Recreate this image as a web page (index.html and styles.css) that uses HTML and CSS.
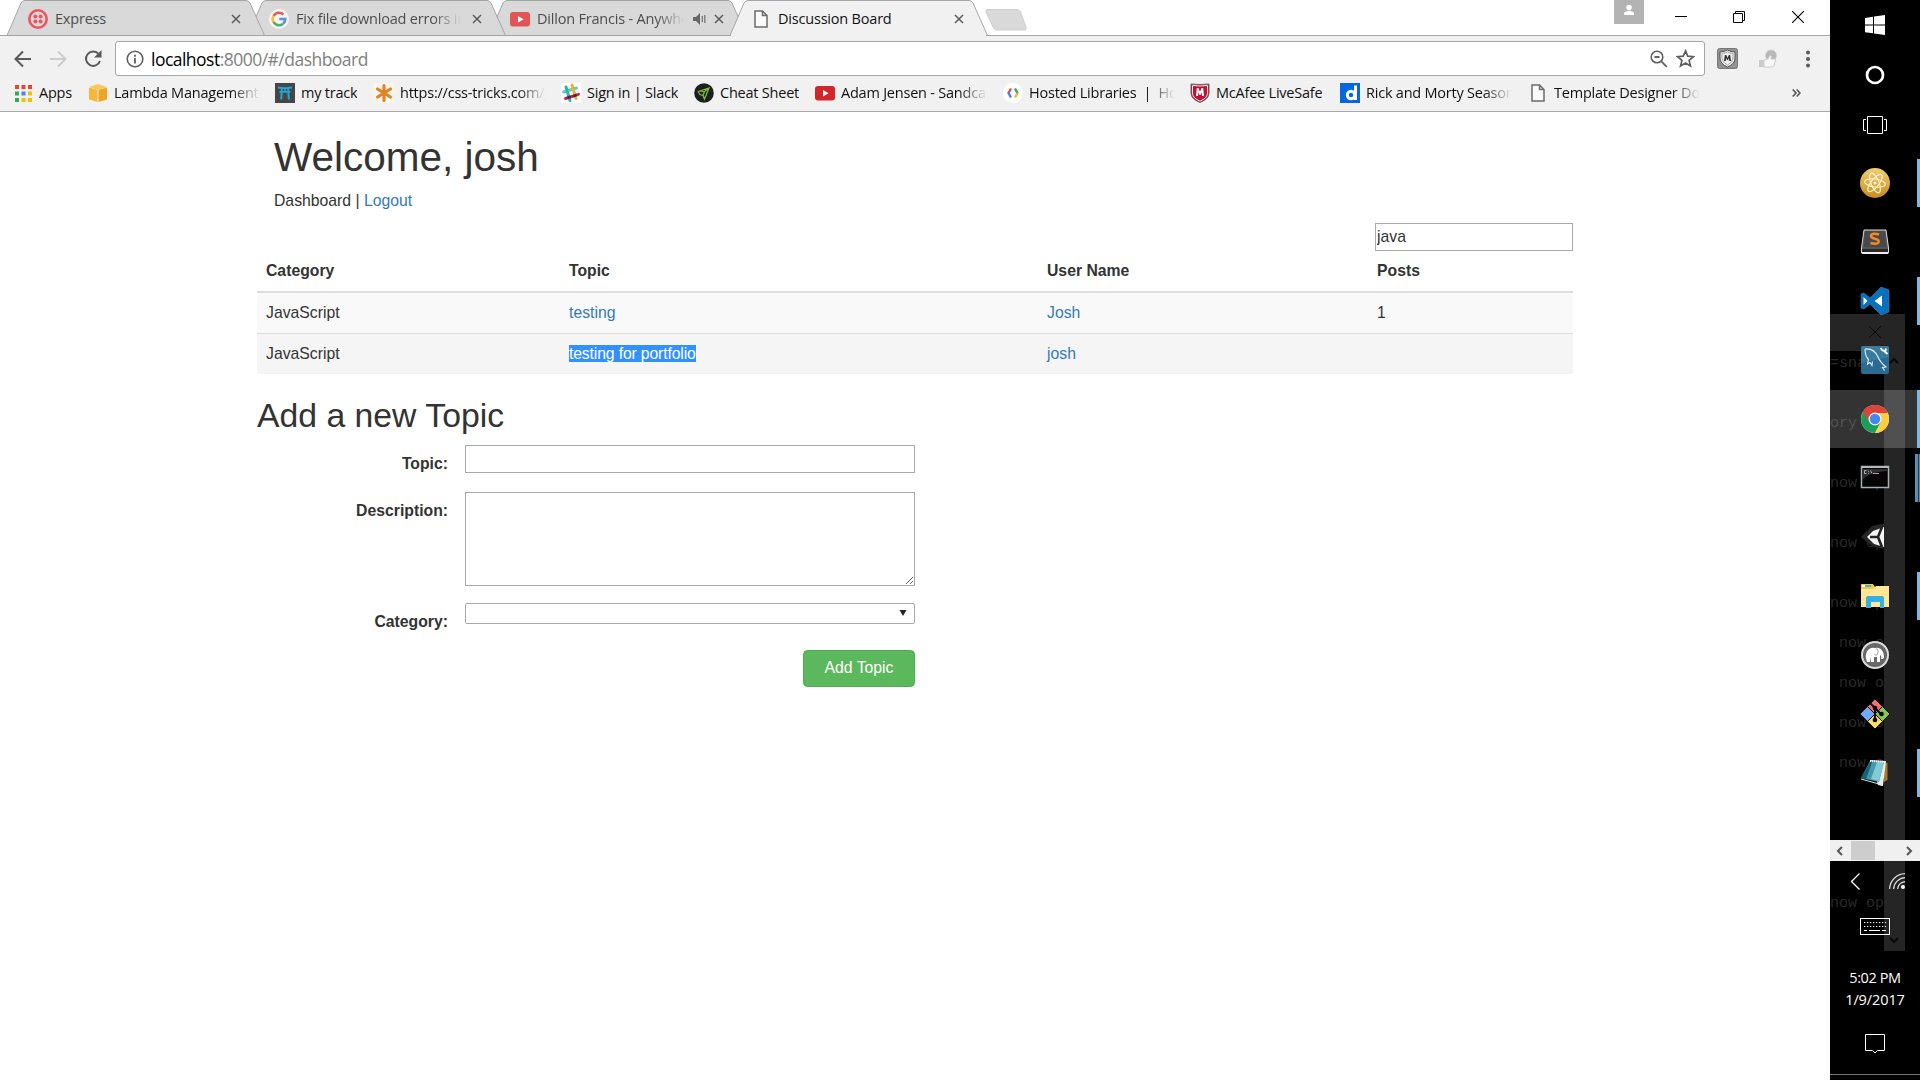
FILE: index.html
```html
<!DOCTYPE html>
<html lang="en">
<head>
<meta charset="utf-8">
<title>Discussion Board</title>
<link rel="stylesheet" href="styles.css">
</head>
<body>
<svg class="defs" width="0" height="0">
  <symbol id="tab" viewBox="0 0 258 36"><path d="M0 35.5 L14 3 Q15.500 .5 18 .5 H239 Q241.500 .5 243 3 L257.500 35.500 Z" stroke="#a5a5a5"/></symbol>
  <symbol id="close" viewBox="0 0 10 10"><path d="M1 1l8 8M9 1L1 9" stroke="#5a5a5a" stroke-width="1.5"/></symbol>
  <symbol id="youtube" viewBox="0 0 20 20"><rect x="0" y="3" width="20" height="14.500" rx="3"/><path d="M8 7l5.500 3.200L8 13.500z" fill="#fff"/></symbol>
  <symbol id="page" viewBox="0 0 14 18"><path d="M1 1h7.500l4.500 4.500V17H1zM8.500 1v4.500H13" fill="#fafafa" stroke="#6b6b6b" stroke-width="1.500"/></symbol>
</svg>
<div class="desktop">
<div class="browser">
  <header class="tabs">
    <div class="tab t1"><svg class="shape"><use href="#tab"/></svg>
      <svg class="fav" viewBox="0 0 20 20"><circle cx="10" cy="10" r="8.700" fill="none" stroke="#ef5360" stroke-width="2.600"/><g fill="#ef5360"><circle cx="7.400" cy="7.400" r="2"/><circle cx="12.600" cy="7.400" r="2"/><circle cx="7.400" cy="12.600" r="2"/><circle cx="12.600" cy="12.600" r="2"/></g></svg>
      <span class="title">Express</span><svg class="x"><use href="#close"/></svg></div>
    <div class="tab t2"><svg class="shape"><use href="#tab"/></svg>
      <svg class="fav" viewBox="0 0 20 20"><circle cx="10" cy="10" r="10" fill="#f5f5f5"/><g fill="none" stroke-width="2.600"><path d="M4.600 7A6.200 6.200 0 0 1 14.500 5.600" stroke="#ea5b50"/><path d="M4.500 6.900a6.200 6.200 0 0 0 0 6.200" stroke="#f6c244"/><path d="M4.500 13a6.200 6.200 0 0 0 9.300 1.900" stroke="#4fae65"/><path d="M10.300 10h6a6.200 6.200 0 0 1-2.300 4.900" stroke="#5b8fee"/></g></svg>
      <span class="title fade g">Fix file download errors in</span><svg class="x"><use href="#close"/></svg></div>
    <div class="tab t3"><svg class="shape"><use href="#tab"/></svg>
      <svg class="fav" viewBox="0 0 20 20" fill="#e25556"><use href="#youtube"/></svg>
      <span class="title fade d">Dillon Francis - Anywhe</span>
      <svg class="snd" viewBox="0 0 13 12"><path d="M0 4h3l4-4v12L3 8H0z" fill="#666"/><path d="M9.300 3v6M11.800 2v8" stroke="#777" stroke-width="1.300"/></svg>
      <svg class="x"><use href="#close"/></svg></div>
    <div class="tab t4"><svg class="shape"><use href="#tab"/></svg>
      <svg class="fav doc" viewBox="0 0 14 18"><use href="#page"/></svg>
      <span class="title">Discussion Board</span><svg class="x"><use href="#close"/></svg></div>
    <svg class="newtab" viewBox="0 0 42 22"><path d="M3 .5H32q2.500 0 3.500 2.500l5.500 15q1 3-1.500 3H12q-2.500 0-3.500-2L1 3Q0 .5 3 .5z" fill="#d9d9d9" stroke="#cfcfcf"/></svg>
    <div class="winctl">
      <svg class="user" viewBox="0 0 30 24"><rect width="30" height="24" fill="#b3b3b3"/><circle cx="15" cy="7.500" r="2.800" fill="#fff"/><path d="M10 15v-1.500q0-2.500 5-2.500t5 2.500V15z" fill="#fff"/></svg>
      <svg class="min" viewBox="0 0 12 12"><path d="M0 5.500h12" stroke="#000"/></svg>
      <svg class="max" viewBox="0 0 12 12"><path d="M.5 2.500h9v9h-9zM2.500 2.500v-2h9v9h-2" fill="none" stroke="#000"/></svg>
      <svg class="cls" viewBox="0 0 12 12"><path d="M0 0l12 12M12 0L0 12" stroke="#000" stroke-width="1.100"/></svg>
    </div>
  </header>
  <div class="toolbar">
    <svg class="nav" viewBox="0 0 18 18"><path d="M17 9H2M9 1.500L1.500 9 9 16.500" fill="none" stroke="#5a5a5a" stroke-width="2"/></svg>
    <svg class="nav" viewBox="0 0 18 18"><path d="M1 9h15M9 1.500L16.500 9 9 16.500" fill="none" stroke="#ccc" stroke-width="2"/></svg>
    <svg class="nav" viewBox="0 0 18 18"><path d="M14.800 4.200A7.200 7.200 0 1 0 16 11" fill="none" stroke="#5a5a5a" stroke-width="2"/><path d="M17.500 0v7.500H10z" fill="#5a5a5a"/></svg>
    <div class="omnibox">
      <svg class="info" viewBox="0 0 18 18"><circle cx="9" cy="9" r="7.800" fill="none" stroke="#5f5f5f" stroke-width="1.600"/><path d="M9 8v5.500M9 4.800v2" stroke="#5f5f5f" stroke-width="1.800"/></svg>
      <span class="url"><b>localhost</b>:8000/#/dashboard</span>
      <svg class="mag" viewBox="0 0 18 18"><circle cx="7" cy="7" r="5.800" fill="none" stroke="#616161" stroke-width="1.600"/><path d="M4.500 7h5M11.300 11.300l5.500 5.500" stroke="#616161" stroke-width="1.800"/></svg>
      <svg class="star" viewBox="0 0 18 18"><path d="M9 1.800l2.100 5 5.400.5-4.100 3.500 1.300 5.300L9 13.300l-4.700 2.800 1.300-5.300-4.100-3.500 5.400-.5z" fill="none" stroke="#5f5f5f" stroke-width="1.600"/></svg>
    </div>
    <svg class="ext" viewBox="0 0 21 21"><rect x=".5" y=".5" width="20" height="20" rx="2" fill="#929292" stroke="#777"/><path d="M3 4q4 0 7.500-2Q14 4 18 4v6q0 6-7.500 9Q3 16 3 10z" fill="#eee" stroke="#555"/><path d="M5 5.500q3 0 5.500-1.600Q13 5.500 16 5.500V10q0 4.500-5.500 7Q5 14.500 5 10z" fill="none" stroke="#999" stroke-width=".8"/><path d="M7 13l.8-6h1.400l1.300 3 1.300-3h1.400l.8 6h-1.800l-.4-3-.8 2h-1l-.8-2-.4 3z" fill="#333"/></svg>
    <svg class="thumb" viewBox="0 0 20 20"><circle cx="13" cy="6.500" r="5.500" fill="#b8b8b8" stroke="#ccc" stroke-dasharray="2 1"/><path d="M1 11h5v7H1z" fill="#c9c9c9"/><path d="M6 11l4-1 2-4q2 0 1 4h4q1 1 0 3l-1 4q0 1-3 1H6z" fill="#f8f8f8" stroke="#ccc"/></svg>
    <svg class="dots" viewBox="0 0 4 18" fill="#5a5a5a"><circle cx="2" cy="2.500" r="2"/><circle cx="2" cy="9" r="2"/><circle cx="2" cy="15.500" r="2"/></svg>
  </div>
  <nav class="bookmarks">
    <div class="bm b-apps"><svg viewBox="0 0 17 17"><g fill="#ea4335"><path d="M0 0h4v4H0zM6.500 0h4v4h-4zM13 0h4v4h-4z"/></g><path d="M0 6.500h4v4H0zM0 13h4v4H0z" fill="#34a853"/><path d="M6.500 6.500h4v4h-4z" fill="#4285f4"/><path d="M13 6.500h4v4h-4zM6.500 13h4v4h-4zM13 13h4v4h-4z" fill="#fbbc05"/></svg><span>Apps</span></div>
    <div class="bm b-lambda"><svg viewBox="0 0 18 18"><path d="M0 3l9-3 9 3-9 3z" fill="#f9c95a"/><path d="M0 3.500l8.500 2.500v12L0 15.500z" fill="#f6b73a"/><path d="M18 3.500L9.500 6v12l8.500-2.500z" fill="#eba623"/></svg><span class="fade">Lambda Management C</span></div>
    <div class="bm b-track"><svg viewBox="0 0 20 20"><path d="M0 0h20v20H0z" fill="#464646"/><path d="M3 3.500q7 1.300 14 0v2q-7 1.200-14 0zM4.500 8h11v1.800h-11zM6 5h1.800l-.6 11.500H5.200zM12.200 5H14l.8 11.500h-2zM9.300 5h1.400v4H9.300z" fill="#20a8dd"/></svg><span>my track</span></div>
    <div class="bm b-css"><svg viewBox="0 0 20 20"><path d="M0 0h20v20H0z" fill="#fff5ea"/><path d="M10 2.500v15M3.500 6l13 8M3.500 14l13-8" stroke="#df8428" stroke-width="3.200" stroke-linecap="round"/></svg><span class="fade">https://css-tricks.com/g</span></div>
    <div class="bm b-slack"><svg viewBox="0 0 20 20"><path d="M0 0h20v20H0z" fill="#fff"/><g stroke-width="2.900" stroke-linecap="round"><path d="M2.500 9L15.500 5" stroke="#62c9dc"/><path d="M4.500 15.500l13-4.200" stroke="#e01563"/><path d="M5 4l4 13.500" stroke="#35b58a"/><path d="M11 2l4 13.500" stroke="#ecb32d"/><path d="M7.200 14.600l1.600-.5M13 12.800l1.600-.5" stroke="#472a49"/></g></svg><span>Sign in | Slack</span></div>
    <div class="bm b-cheat"><svg viewBox="0 0 20 20"><circle cx="10" cy="10" r="9.800" fill="#1c1f20"/><path d="M4 8.500L15 5l-4.500 11L9 12.500M4 8.500l2 3 3 1 1.500-4L6.500 8M10.500 8.500L15 5" fill="none" stroke="#80ba32" stroke-width="1.300"/></svg><span>Cheat Sheet</span></div>
    <div class="bm b-yt"><svg viewBox="0 0 20 20" fill="#d3252a"><use href="#youtube"/></svg><span class="fade">Adam Jensen - Sandcas</span></div>
    <div class="bm b-host"><svg viewBox="0 0 20 20"><circle cx="10" cy="10" r="10" fill="#fff"/><g fill="none" stroke-width="2.400"><path d="M8 5.500L5.500 10" stroke="#e94b3f"/><path d="M5 9.200L8 14.500" stroke="#4285f4"/><path d="M12 5.500L14.700 10.500" stroke="#34a36a"/><path d="M14.600 10L12 14.500" stroke="#f5b825"/></g></svg><span class="fade pre">Hosted Libraries  |  Hos</span></div>
    <div class="bm b-mcafee"><svg viewBox="0 0 20 20"><path d="M1 1q9 1 18 0v9q0 6-9 9.500Q1 16 1 10z" fill="#c01033" stroke="#666"/><path d="M2.500 2.500q7.500 1 15 0v7.500q0 5-7.500 8.200Q2.500 15 2.500 10z" fill="none" stroke="#eee"/><path d="M6 13l.8-8h1.700L10 8.800 11.500 5h1.700l.8 8h-2l-.5-3.800L10.500 12h-1L8.500 9.200 8 13z" fill="#fff"/></svg><span>McAfee LiveSafe</span></div>
    <div class="bm b-rick"><svg viewBox="0 0 20 20"><path d="M0 0h20v20H0z" fill="#0766df"/><circle cx="11" cy="12" r="3.700" fill="none" stroke="#fff" stroke-width="3"/><path d="M15.500 17V2.500" stroke="#fff" stroke-width="3"/></svg><span class="fade">Rick and Morty Season</span></div>
    <div class="bm b-template"><svg viewBox="0 0 14 18"><use href="#page"/></svg><span class="fade">Template Designer Docu</span></div>
    <svg class="more" viewBox="0 0 9 8"><path d="M.7.5L4 4 .7 7.500M4.700.5L8 4 4.700 7.500" fill="none" stroke="#555" stroke-width="1.600"/></svg>
  </nav>
  <main class="page">
    <h1>Welcome, josh</h1>
    <p class="crumbs">Dashboard | <a>Logout</a></p>
    <div class="search"><input class="field" type="text" value="java"></div>
    <table>
      <thead><tr><th class="c1">Category</th><th class="c2">Topic</th><th class="c3">User Name</th><th>Posts</th></tr></thead>
      <tbody>
        <tr class="odd"><td>JavaScript</td><td><a>testing</a></td><td><a>Josh</a></td><td>1</td></tr>
        <tr class="hover"><td>JavaScript</td><td><a class="selected">testing for portfolio</a></td><td><a>josh</a></td><td></td></tr>
      </tbody>
    </table>
    <h2>Add a new Topic</h2>
    <form>
      <label>Topic:</label><input class="field" type="text">
      <label>Description:</label><textarea class="field"></textarea>
      <label>Category:</label><div class="select"><svg viewBox="0 0 8 6"><path d="M.5 0h7L4 6z" fill="#222"/></svg></div>
      <button type="button">Add Topic</button>
    </form>
  </main>
</div>
<aside class="taskbar">
  <div class="ghost">
    <div class="ghost-head"><svg viewBox="0 0 12 12"><path d="M0 0l12 12M12 0L0 12" stroke="#080808"/></svg></div>
    <div class="ghost-bar"></div>
    <span style="top:355px">=sna</span><span style="top:415px">ory</span><span style="top:475px">now op</span><span style="top:535px">now op</span><span style="top:595px">now op</span><span class="in" style="top:635px">now o</span><span class="in" style="top:675px">now o</span><span class="in" style="top:715px">now o</span><span class="in" style="top:755px">now o</span><span style="top:895px">now op</span>
    <svg class="up" viewBox="0 0 10 8"><path d="M1 6l4-4 4 4" fill="none" stroke="#080808" stroke-width="2"/></svg>
    <svg class="down" viewBox="0 0 10 8"><path d="M1 2l4 4 4-4" fill="none" stroke="#080808" stroke-width="2"/></svg>
  </div>
  <div class="sys"><svg width="20" height="20" viewBox="0 0 20 20" fill="#fff"><path d="M0 3l8-1.200V9.500H0zM9 1.600L20 0v9.500H9zM0 10.500h8v7.800L0 17.200zM9 10.500h11V20L9 18.400z"/></svg></div>
  <div class="sys"><svg width="20" height="20" viewBox="0 0 20 20"><circle cx="10" cy="10" r="8" fill="none" stroke="#fff" stroke-width="2.700"/></svg></div>
  <div class="sys"><svg width="24" height="18" viewBox="0 0 24 18"><path d="M4.500.5h15v17h-15zM3 3.500H.5v11H3M21 3.500h2.500v11H21" fill="none" stroke="#fff"/></svg></div>
  <div class="apps">
    <div class="app open"><svg viewBox="0 0 30 30"><defs><linearGradient id="gold" x2="0" y2="1"><stop stop-color="#efd074"/><stop offset="1" stop-color="#c98b20"/></linearGradient></defs><circle cx="15" cy="15" r="15" fill="url(#gold)"/><g fill="none" stroke="#fff5cf" stroke-width="1.100" transform="rotate(8 15 15)"><ellipse cx="15" cy="15" rx="10.500" ry="4"/><ellipse cx="15" cy="15" rx="10.500" ry="4" transform="rotate(60 15 15)"/><ellipse cx="15" cy="15" rx="10.500" ry="4" transform="rotate(120 15 15)"/></g><circle cx="15" cy="15" r="1.500" fill="#fff"/></svg></div>
    <div class="app"><svg viewBox="0 0 30 30"><path d="M4 3h22l2.500 18v5h-27v-5z" fill="#555" stroke="#ddd"/><path d="M2 22h26v3.500H2z" fill="#292929"/><path d="M2 26h26" stroke="#eee" stroke-width="2"/><path d="M5 4h20l1 16H4z" fill="#494949"/><path d="M19 7.500q-7-2-8 1-.3 2.500 4 3.300 4.500.8 3.500 3.500-1.500 2.500-8 .7" fill="none" stroke="#f58a24" stroke-width="2.600"/></svg></div>
    <div class="app open"><svg viewBox="0 0 30 30"><path d="M1 8l3-1 6 5L21 1l8 3v22l-8 3-11-11-6 5-3-1z" fill="#0871bd" stroke="#477ea8" stroke-width=".6"/><path d="M3.500 11v8l4-4zM22 9.500v11L14.500 15z" fill="#fff"/></svg></div>
    <div class="app"><svg viewBox="0 0 30 30"><rect x="1" y="1" width="28" height="28" rx="2" fill="#2c6b91"/><path d="M1 3q0-2 2-2h24q2 0 2 2v9L1 18z" fill="#397b9e"/><path d="M5 4q9-1 13 8 2 5 8 10l-3.500.5 2 3M5 4q0 7 3.500 10.500L7.500 19l2.500-1.500 2 3 .5-4" fill="none" stroke="#e3f0f6" stroke-width="1.100"/><path d="M20.500 3l2 2.500 3 .5.500-2.500M23 5l4.500 4" fill="none" stroke="#fff" stroke-width="1.800"/></svg></div>
    <div class="app active"><svg viewBox="0 0 28 28"><circle cx="14" cy="14" r="14" fill="#e8e8e8"/><path d="M14 14L1.900 7A14 14 0 0 1 26.100 7z" fill="#db4437"/><path d="M14 14L1.900 7A14 14 0 0 0 14 28l6-10.500z" fill="#179f5c"/><path d="M14 7.500h12.500A14 14 0 0 1 14 28l5.600-10.800z" fill="#ffce43"/><path d="M1.900 7L8 17l3-9h15.500L26 7A14 14 0 0 0 1.900 7" fill="#db4437"/><circle cx="14" cy="14" r="6.500" fill="#f5f5f5"/><circle cx="14" cy="14" r="5.200" fill="#4688f1"/></svg></div>
    <div class="app open multi"><svg viewBox="0 0 30 24"><rect x="1.500" y="1.500" width="27" height="21" fill="#050505" stroke="#a8afb5" stroke-width="1.500"/><path d="M2 4h26v2Q7 7 2 16z" fill="#303030"/><path d="M2 2.300h26" stroke="#ddd"/><path d="M6.500 5.500H4.500v3h2M8.500 5.800v.9M8.500 7.800v.9M10.500 5.500l1.500 3M13 8.500h6" fill="none" stroke="#bbb" stroke-width=".9"/></svg></div>
    <div class="app"><svg viewBox="0 0 30 30"><path d="M1 15L12 4l13-3 2 13-1 13-13-2z" fill="#262626"/><path d="M7 15l6-6 11-4v20l-10-3z" fill="#f4f4f4"/><path d="M10 15h8l4-10M18 15l4 10" fill="none" stroke="#222" stroke-width="2.600"/><path d="M13 11l5-2-2 4h-4zM12 17h4l2 4-4-1z" fill="#f4f4f4"/></svg></div>
    <div class="app open"><svg viewBox="0 0 30 30"><path d="M1 3h12l2 3h14v20H1z" fill="#f5c940"/><path d="M2 4h3v2H2z" fill="#fff"/><path d="M5 4h6v2H5z" fill="#3fb2e5"/><path d="M1 8h12l3-3h13v21H1z" fill="#ffe794"/><path d="M6 27V17q0-2 2-2h14q2 0 2 2v10h-4v-6h-9v6z" fill="#35afe4"/></svg></div>
    <div class="app"><svg viewBox="0 0 30 30"><circle cx="15" cy="15" r="13" fill="#686868" stroke="#ddd" stroke-width="2"/><path d="M7 22q-2.500-7 .5-11.500Q10 7 15 8q5-1 8 4 2 5 0 7h-2q1-3-1-4v7h-3v-5h-3v5h-3v-5l-1 5z" fill="#fff"/><path d="M16.500 8q3 4 1 6.500-2 1.500-3 0" fill="none" stroke="#888" stroke-width=".8"/></svg></div>
    <div class="app"><svg viewBox="0 0 30 30"><g stroke="#111" stroke-width="1"><path d="M15 0l7.500 7.500L15 15 7.500 7.500z" fill="#f66f70"/><path d="M22.500 7.500L30 15l-7.500 7.500L15 15z" fill="#80c84e"/><path d="M7.500 7.500L15 15l-7.500 7.500L0 15z" fill="#72a8fa"/><path d="M15 15l7.500 7.500L15 30l-7.500-7.500z" fill="#f9dc68"/></g><path d="M10.500 4.500L15 9v12M15 9l6 6" stroke="#111" stroke-width="2" fill="none"/><circle cx="15" cy="9" r="2.300"/><circle cx="15" cy="21" r="2.300"/><circle cx="21.500" cy="15" r="2.300"/></svg></div>
    <div class="app open"><svg viewBox="0 0 30 30"><path d="M24 4l3.500 1v17L24 24z" fill="#a97826"/><path d="M10 2l16 1-3 25-5-1z" fill="#e6eef0"/><path d="M10 3l14 1-5 20L1 20z" fill="#3f9aab"/><path d="M10 4l2 .5L6 21l-5-1z" fill="#176270"/><path d="M17 4h7l-5 19-8-2z" fill="#85cad3"/><path d="M1 21l18 5 3 1.500" fill="none" stroke="#dbe8ea"/><path d="M10 3l16 1" stroke="#eee" stroke-width="2" stroke-dasharray="1 1"/></svg></div>
  </div>
  <div class="hscroll"><svg viewBox="0 0 7 10"><path d="M6 1L2 5l4 4" /></svg><i></i><svg viewBox="0 0 7 10"><path d="M1 1l4 4-4 4"/></svg></div>
  <div class="tray"><svg width="9" height="17" viewBox="0 0 9 17"><path d="M8.500.5l-8 8 8 8" fill="none" stroke="#fff" stroke-width="1.300"/></svg><svg width="16" height="16" viewBox="0 0 16 16"><g fill="none" stroke="#ddd" stroke-width="1.200"><path d="M.6 16A16 16 0 0 1 16 .6M4.600 16A12 12 0 0 1 16 4.600M8.600 16A8 8 0 0 1 16 8.600"/></g><circle cx="14" cy="14" r="2" fill="#fff"/></svg></div>
  <div class="keys"><svg width="30" height="17" viewBox="0 0 30 17"><rect x=".5" y=".5" width="29" height="16" fill="none" stroke="#fff"/><path d="M4 4.500h22M4 8.500h22" stroke="#fff" stroke-dasharray="1.300 1.700"/><path d="M4 12.500h3M9 12.500h11M22 12.500h4" stroke="#fff"/></svg></div>
  <div class="clock"><span>5:02 PM</span><span class="date">1/9/2017</span></div>
  <div class="notes"><svg width="20" height="20" viewBox="0 0 20 20"><path d="M.5.500h19v16h-7l-2.500 2.500-2.500-2.500h-7z" fill="none" stroke="#fff"/></svg></div>
</aside>
</div>
</body>
</html>
```
FILE: styles.css
```css
* { box-sizing: border-box; }
body { margin: 0; background: #fff; color: #333; font: 15.75px/22.5px "Liberation Sans", Arial, sans-serif; overflow: hidden; }
svg { display: block; flex: none; }
.defs { position: absolute; }
.desktop { display: flex; width: 1920px; height: 1080px; }
.browser { width: 1830px; flex: none; }

.tabs { display: flex; height: 36px; padding-left: 7px; border-bottom: 1px solid #a5a5a5; font: 14.5px/20px "Open Sans", "Noto Sans", sans-serif; letter-spacing: -.2px; }
.tab { position: relative; display: flex; align-items: center; width: 258px; height: 36px; margin-right: -17px; padding: 2px 24px 0 21px; color: #4d4d4d; flex: none; }
.tab .shape { position: absolute; left: 0; top: 0; width: 258px; height: 36px; z-index: -1; fill: #d9d9d9; }
.t1 { z-index: 3; } .t2 { z-index: 2; } .t3 { z-index: 1; padding-right: 23px; } .t4 { z-index: 4; color: #111; }
.t4 .shape { fill: #f1f1f1; }
.t4::after { content: ""; position: absolute; left: 1px; right: 2px; bottom: 0; height: 1px; background: #f1f1f1; }
.fav { width: 20px; height: 20px; margin-right: 7px; }
.fav.doc { width: 14px; height: 18px; margin: 0 10px 0 3px; }
.title { flex: 1; white-space: nowrap; overflow: hidden; }
.fade { -webkit-mask-image: linear-gradient(to right, #000 calc(100% - 28px), transparent); mask-image: linear-gradient(to right, #000 calc(100% - 28px), transparent); }
.title.g { max-width: 166px; margin-right: 11px; }
.title.d { max-width: 147px; }
.snd { width: 13px; height: 12px; margin: 0 8px 0 9px; }
.x { width: 10px; height: 10px; }
.newtab { width: 42px; height: 22px; margin: 9px 0 0 14px; }
.winctl { display: flex; margin-left: auto; padding-right: 26px; }
.user { width: 30px; height: 24px; }
.min, .max, .cls { width: 12px; height: 12px; margin-top: 11px; }
.min { margin-left: 31px; } .max { margin-left: 46px; } .cls { margin-left: 47px; }

.toolbar { display: flex; align-items: center; height: 40px; padding: 5px 20px 0 14px; background: #f1f1f1; }
.nav { width: 18px; height: 18px; margin-right: 17px; }
.nav:nth-child(3) { margin-right: 13px; }
.omnibox { display: flex; align-items: center; width: 1590px; height: 35px; padding: 0 10px; border: 1px solid #a5a5a5; border-radius: 3px; background: #fff; }
.info { width: 18px; height: 18px; margin-right: 7px; }
.url { flex: 1; font: 17.500px/24px "Open Sans", "Noto Sans", sans-serif; letter-spacing: -.52px; color: #808080; }
.url b { font-weight: 400; color: #000; }
.mag { width: 18px; height: 18px; margin-right: 8px; }
.star { width: 19px; height: 19px; margin-right: -1px; }
.ext { width: 21px; height: 21px; margin-left: 12px; }
.thumb { width: 20px; height: 20px; margin-left: 20px; }
.dots { width: 4px; height: 18px; margin-left: auto; }

.bookmarks { display: flex; align-items: center; height: 36px; padding: 0 29px 1px 14px; border-bottom: 1px solid #a9a9a9; background: #f1f1f1; font: 14.500px/20px "Open Sans", "Noto Sans", sans-serif; letter-spacing: -.22px; color: #111; }
.bm { display: flex; align-items: center; flex: none; gap: 6px; white-space: nowrap; }
.bm svg { width: 20px; height: 20px; }
.bm span { overflow: hidden; }
.bm .fade { width: 146px; }
.pre { white-space: pre; }
.b-apps { width: 75px; gap: 7px; padding-left: 1px; } .b-apps svg { width: 17px; height: 17px; }
.b-lambda { width: 186px; gap: 7px; } .b-lambda svg { width: 18px; height: 18px; }
.b-track { width: 99px; } .b-css { width: 187px; } .b-slack { width: 133px; } .b-cheat { width: 121px; }
.b-yt { width: 188px; } .b-host { width: 187px; } .b-mcafee { width: 150px; } .b-rick { width: 190px; }
.b-template { width: 170px; gap: 9px; padding-left: 1px; } .b-template svg { width: 14px; height: 18px; }
.more { width: 9px; height: 8px; margin-left: auto; }

.page { width: 1316px; margin-left: 257px; padding-top: 23px; }
h1 { margin: 0; padding-left: 17px; font-size: 40.500px; line-height: 45px; font-weight: 400; }
.crumbs { margin: 10px 0 0; padding-left: 17px; }
a { color: #337ab7; }
.search { display: flex; justify-content: flex-end; height: 28px; margin-top: 10.500px; }
.field { font: inherit; color: #333; border: 1px solid #a9a9a9; border-radius: 0; background: #fff; padding: 1px; margin: 0; outline: 0; }
input.field { height: 28px; }
.search .field { width: 198px; }
table { width: 1316px; table-layout: fixed; border-collapse: separate; border-spacing: 0; }
.c1 { width: 303px; } .c2 { width: 478px; } .c3 { width: 330px; }
th, td { text-align: left; line-height: 22px; }
th { height: 42px; padding: 9px 9px 9px; border-bottom: 2px solid #ddd; vertical-align: top; }
td { height: 40px; padding: 9px; }
.odd { background: #f9f9f9; }
.hover { background: #f5f5f5; }
.hover td { height: 41px; border-top: 1px solid #ddd; }
.selected { background: #3390ff; color: #fff; line-height: 17px; letter-spacing: -.14px; }
h2 { margin: 23px 0 0; font-size: 33.750px; line-height: 37px; font-weight: 400; }
form { display: grid; grid-template-columns: 191px 450px; column-gap: 17px; grid-template-rows: 47px 111px 47px 38px; align-items: start; margin-top: 11px; }
label { text-align: right; font-weight: 700; padding-top: 8px; }
textarea.field { height: 94px; }
form .field { width: 450px; }
.select { display: flex; justify-content: flex-end; height: 21px; padding: 6px 7px; border: 1px solid #a9a9a9; border-radius: 2px; }
.select svg { width: 8px; height: 6px; }
button { grid-column: 2; justify-self: end; width: 112px; height: 37px; padding: 0; border: 1px solid #4cae4c; border-radius: 4.500px; background: #5cb85c; color: #fff; font: inherit; }

.taskbar { position: relative; z-index: 0; display: flex; flex-direction: column; width: 90px; height: 1080px; background: #000; color: #fff; overflow: hidden; }
.ghost { position: absolute; inset: 0; z-index: -1; color: #292929; font: 15px/18px "Liberation Mono", monospace; white-space: pre; }
.ghost span { position: absolute; left: 0; width: 54px; overflow: hidden; }
.ghost span.in { padding-left: 9px; }
.ghost-head { position: absolute; top: 314px; left: 0; width: 75px; height: 37px; padding: 12px 0 0 39px; background: #252525; }
.ghost-head svg { width: 12px; height: 12px; }
.ghost-bar { position: absolute; top: 351px; left: 54px; width: 21px; height: 600px; background: #252525; }
.up, .down { position: absolute; left: 59px; width: 10px; height: 8px; }
.up { top: 357px; } .down { top: 936px; }
.sys { display: flex; align-items: center; justify-content: center; height: 50px; }
.apps { padding-top: 3px; height: 690px; }
.app { display: flex; align-items: center; justify-content: center; height: 59px; }
.app svg { width: 30px; height: 30px; }
.app.open { background: linear-gradient(#76b9ed, #76b9ed) right center / 3px 48px no-repeat; }
.app.active { height: 58px; margin: 1px 0 0; border-right: 3px solid #76b9ed; background: rgba(255,255,255,.2); padding-left: 3px; }
.app.active svg { width: 28px; height: 28px; }
.app.multi { background: linear-gradient(to right, #5a8db4 3px, #25394a 3px 4px, #5a8db4 4px) right center / 5px 48px no-repeat; }
.app.multi svg { height: 24px; margin-bottom: 2px; }
.hscroll { display: flex; align-items: center; height: 21px; padding: 0 7px 0 6px; background: #f0f0f0; }
.hscroll svg { width: 7px; height: 10px; fill: none; stroke: #555; stroke-width: 2; }
.hscroll i { width: 24px; height: 19px; margin: 0 38px 0 8px; flex: none; background: #cdcdcd; }
.hscroll svg:last-child { margin-left: -7px; }
.tray { display: flex; align-items: center; height: 40px; padding-left: 21px; gap: 29px; }
.keys { display: flex; justify-content: center; padding-top: 17px; height: 63px; }
.clock { display: flex; flex-direction: column; align-items: center; height: 70px; padding-top: 3px; font: 14.500px/22px "Open Sans", "Noto Sans", sans-serif; letter-spacing: -.4px; }
.date { letter-spacing: -.1px; }
.notes { display: flex; justify-content: center; height: 41px; border-bottom: 1px solid #777; }
```
